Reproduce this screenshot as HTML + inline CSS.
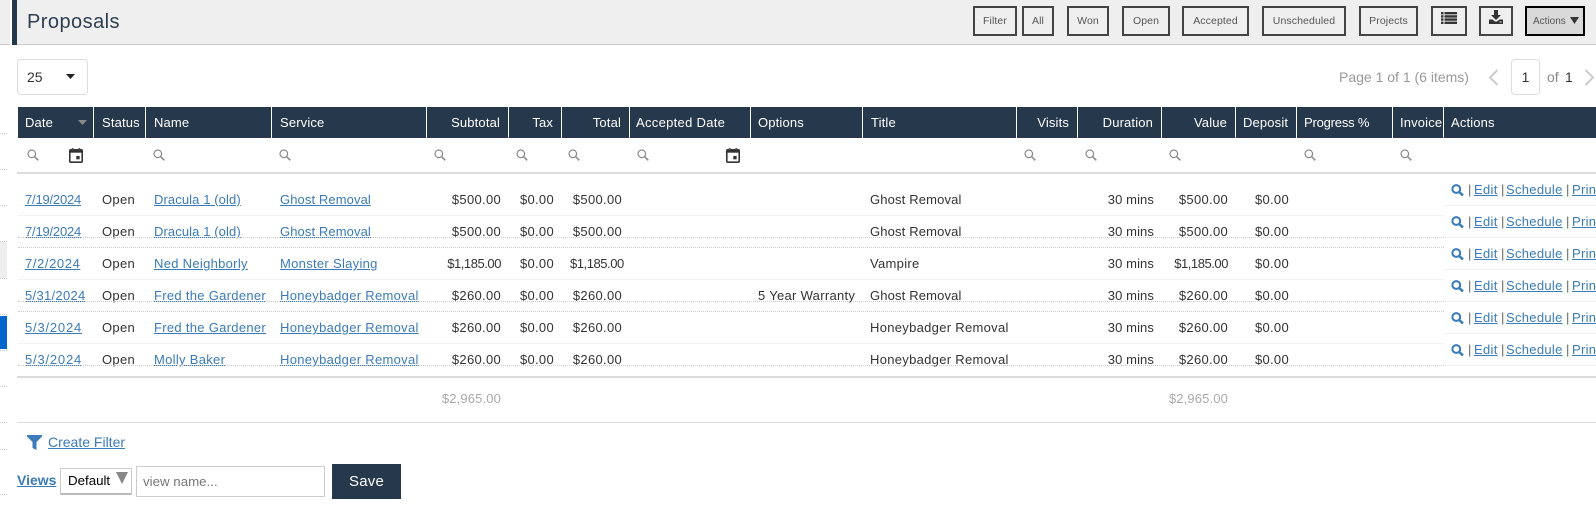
<!DOCTYPE html>
<html>
<head>
<meta charset="utf-8">
<style>
html,body{margin:0;padding:0;background:#fff;}
body{position:relative;width:1596px;height:506px;overflow:hidden;font-family:"Liberation Sans",sans-serif;color:#333;}
.a{position:absolute;}
.btn{position:absolute;top:6px;height:30px;box-sizing:border-box;border:2px solid #444;font-size:10.5px;letter-spacing:.1px;line-height:26px;text-align:center;color:#555;white-space:nowrap;}
table{position:absolute;left:18px;border-collapse:separate;border-spacing:0;table-layout:fixed;width:1578px;font-size:13px;letter-spacing:.3px;}
td,th{padding:0 8px;white-space:nowrap;overflow:hidden;box-sizing:border-box;font-weight:normal;text-align:left;}
th{background:#26384b;color:#fff;height:31px;padding-bottom:1px;border-right:1px solid #fff;letter-spacing:.15px;}
th:first-child,.rows td:first-child{padding-left:7px;}
.r{text-align:right;}
.rows td{height:32px;line-height:32px;padding-top:0;color:#333;}
.rows td.p7{padding-left:7px;}
a{color:#3a7bb8;text-decoration:underline;}
.t{letter-spacing:-.45px;}
.g{letter-spacing:.1px;}
.m{letter-spacing:.15px;}
.solid{position:absolute;left:18px;width:1426px;height:1px;background:#f2f2f2;}
.dot{position:absolute;left:18px;width:1426px;height:0;border-top:1px dotted #ccc;}
.al{position:absolute;left:1444px;width:152px;height:1px;background:#f0f0f0;}
.act{position:absolute;left:1451px;width:145px;height:18px;line-height:18px;font-size:13px;letter-spacing:.3px;color:#666;white-space:nowrap;overflow:hidden;}
.act svg{position:absolute;left:0;top:3px;}
.act span,.act a{position:absolute;top:0;}
.sd{position:absolute;left:0;width:7px;height:0;border-top:1px dotted #ccc;}
.s{position:absolute;top:149px;width:12px;height:12px;}
.cal{position:absolute;top:148px;width:14px;height:15px;}
</style>
</head>
<body>
<svg width="0" height="0" style="position:absolute">
<symbol id="mag" viewBox="0 0 12 12"><circle cx="4.8" cy="4.8" r="3.8" fill="none" stroke="#888" stroke-width="1.2"/><path d="M7.6 7.6L11.3 11.3" stroke="#888" stroke-width="1.5" fill="none"/></symbol>
<symbol id="cal" viewBox="0 0 15 16"><rect x="0" y="1" width="15" height="15" rx="2" fill="#333"/><rect x="3" y="0" width="2" height="2" fill="#555"/><rect x="10" y="0" width="2" height="2" fill="#555"/><rect x="1.7" y="5" width="11.6" height="9.3" fill="#fff"/><rect x="7.8" y="8.5" width="3.6" height="3.6" fill="#333"/></symbol>
<symbol id="bmag" viewBox="0 0 13 12"><circle cx="5.3" cy="5" r="3.9" fill="none" stroke="#3a7bb8" stroke-width="2"/><path d="M8.2 8L12 11.5" stroke="#3a7bb8" stroke-width="2.5" fill="none"/></symbol>
</svg>

<!-- left strip -->
<div class="a" style="left:0;top:0;width:10px;height:44px;background:#efefef;border-bottom:1px solid #ccc"></div>
<div class="sd" style="top:133px"></div>
<div class="sd" style="top:169px"></div>
<div class="sd" style="top:205px"></div>
<div class="a" style="left:0;top:242px;width:7px;height:36px;background:#efefef"></div>
<div class="sd" style="top:241px"></div>
<div class="sd" style="top:278px"></div>
<div class="sd" style="top:314px"></div>
<div class="a" style="left:0;top:316px;width:7px;height:33px;background:#0066cc"></div>
<div class="sd" style="top:350px"></div>
<div class="sd" style="top:386px"></div>
<div class="sd" style="top:422px"></div>
<div class="sd" style="top:449px"></div>
<div class="sd" style="top:494px"></div>

<!-- top band -->
<div class="a" style="left:17px;top:0;width:1579px;height:44px;background:#efefef;border-bottom:1px solid #ccc"></div>
<div class="a" style="left:12px;top:0;width:5px;height:45px;background:#26384b"></div>
<div class="a" style="left:27px;top:8px;font-size:20px;letter-spacing:.45px;line-height:28px;color:#2c3e50">Proposals</div>

<div class="btn" style="left:973px;width:44px">Filter</div>
<div class="btn" style="left:1022px;width:32px">All</div>
<div class="btn" style="left:1067px;width:42px">Won</div>
<div class="btn" style="left:1122px;width:48px">Open</div>
<div class="btn" style="left:1182px;width:67px">Accepted</div>
<div class="btn" style="left:1262px;width:84px">Unscheduled</div>
<div class="btn" style="left:1359px;width:59px">Projects</div>
<div class="btn" style="left:1431px;width:36px"></div>
<svg class="a" style="left:1441px;top:12px" width="16" height="12" viewBox="0 0 16 12"><path d="M0 0h2.5v2.4H0zM3.5 0H16v2.4H3.5zM0 3.2h2.5v2.4H0zM3.5 3.2H16v2.4H3.5zM0 6.4h2.5v2.4H0zM3.5 6.4H16v2.4H3.5zM0 9.6h2.5V12H0zM3.5 9.6H16V12H3.5z" fill="#333"/></svg>
<div class="btn" style="left:1479px;width:34px"></div>
<svg class="a" style="left:1489px;top:10px" width="14" height="14" viewBox="0 0 14 14"><path d="M5 0h4v5h3L7 10 2 5h3z" fill="#333"/><path d="M0 9.5h3.5L6 11.5h2l2.5-2H14V14H0z" fill="#333"/><rect x="10.6" y="11.5" width="2" height="1" fill="#efefef"/></svg>
<div class="btn" style="left:1525px;width:60px;background:#d9d9d9;border-color:#000;text-align:left;padding-left:6px;font-size:10px;letter-spacing:0;line-height:28px">Actions</div>
<svg class="a" style="left:1570px;top:17px" width="9" height="7" viewBox="0 0 9 7"><path d="M0 0h9L4.5 7z" fill="#333"/></svg>

<!-- page size -->
<div class="a" style="left:17px;top:59px;width:71px;height:36px;box-sizing:border-box;border:1px solid #ddd;border-radius:4px;"></div>
<div class="a" style="left:27px;top:69px;font-size:14px;line-height:16px;color:#333">25</div>
<svg class="a" style="left:66px;top:74px" width="9" height="5" viewBox="0 0 9 5"><path d="M0 0h9L4.5 5z" fill="#222"/></svg>

<!-- pagination -->
<div class="a" style="left:1339px;top:69px;font-size:14px;line-height:16px;color:#999;white-space:nowrap">Page 1 of 1 (6 items)</div>
<svg class="a" style="left:1488px;top:69px" width="11" height="17" viewBox="0 0 11 17"><path d="M9.5 1L2 8.5 9.5 16" fill="none" stroke="#ccc" stroke-width="2"/></svg>
<div class="a" style="left:1511px;top:59px;width:29px;height:36px;box-sizing:border-box;border:1px solid #ddd;border-radius:4px;text-align:center;line-height:34px;font-size:14px;color:#333">1</div>
<div class="a" style="left:1547px;top:69px;font-size:14px;line-height:16px;color:#888">of</div>
<div class="a" style="left:1565px;top:69px;font-size:14px;line-height:16px;color:#333">1</div>
<svg class="a" style="left:1584px;top:69px" width="11" height="17" viewBox="0 0 11 17"><path d="M1.5 1L9 8.5 1.5 16" fill="none" stroke="#ccc" stroke-width="2"/></svg>

<!-- header -->
<table style="top:107px">
<colgroup><col style="width:76px"><col style="width:52px"><col style="width:126px"><col style="width:155px"><col style="width:82px"><col style="width:53px"><col style="width:68px"><col style="width:121px"><col style="width:112px"><col style="width:154px"><col style="width:61px"><col style="width:84px"><col style="width:74px"><col style="width:61px"><col style="width:96px"><col style="width:51px"><col></colgroup>
<tr><th>Date</th><th>Status</th><th>Name</th><th>Service</th><th class="r">Subtotal</th><th class="r">Tax</th><th class="r">Total</th><th style="letter-spacing:.3px;padding-left:6px">Accepted Date</th><th style="padding-left:7px">Options</th><th>Title</th><th class="r">Visits</th><th class="r">Duration</th><th class="r">Value</th><th style="padding-left:7px">Deposit</th><th style="letter-spacing:-.2px;padding-left:7px">Progress %</th><th style="padding:0 0 1px 7px">Invoice</th><th style="border-right:0;padding-left:7px">Actions</th></tr>
</table>
<svg class="a" style="left:78px;top:120px" width="9" height="5" viewBox="0 0 9 5"><path d="M0 0h9L4.5 5z" fill="#8a8a8a"/></svg>

<!-- filter icons -->
<svg class="s" style="left:27px"><use href="#mag"/></svg>
<svg class="cal" style="left:69px"><use href="#cal"/></svg>
<svg class="s" style="left:153px"><use href="#mag"/></svg>
<svg class="s" style="left:279px"><use href="#mag"/></svg>
<svg class="s" style="left:434px"><use href="#mag"/></svg>
<svg class="s" style="left:516px"><use href="#mag"/></svg>
<svg class="s" style="left:568px"><use href="#mag"/></svg>
<svg class="s" style="left:637px"><use href="#mag"/></svg>
<svg class="cal" style="left:726px"><use href="#cal"/></svg>
<svg class="s" style="left:1024px"><use href="#mag"/></svg>
<svg class="s" style="left:1085px"><use href="#mag"/></svg>
<svg class="s" style="left:1169px"><use href="#mag"/></svg>
<svg class="s" style="left:1304px"><use href="#mag"/></svg>
<svg class="s" style="left:1400px"><use href="#mag"/></svg>

<div class="a" style="left:17px;top:172px;width:1579px;height:2px;background:#ddd"></div>

<!-- rows -->
<table class="rows" style="top:184px">
<colgroup><col style="width:76px"><col style="width:52px"><col style="width:126px"><col style="width:155px"><col style="width:82px"><col style="width:53px"><col style="width:68px"><col style="width:121px"><col style="width:112px"><col style="width:154px"><col style="width:61px"><col style="width:84px"><col style="width:74px"><col style="width:61px"><col style="width:96px"><col style="width:51px"><col></colgroup>
<tr><td><a style="letter-spacing:-.2px">7/19/2024</a></td><td>Open</td><td><a class="g">Dracula 1 (old)</a></td><td><a class="g">Ghost Removal</a></td><td class="r">$500.00</td><td class="r">$0.00</td><td class="r">$500.00</td><td></td><td></td><td class="m p7">Ghost Removal</td><td></td><td class="r g">30 mins</td><td class="r">$500.00</td><td class="r">$0.00</td><td></td><td></td><td></td></tr>
<tr><td><a style="letter-spacing:-.2px">7/19/2024</a></td><td>Open</td><td><a class="g">Dracula 1 (old)</a></td><td><a class="g">Ghost Removal</a></td><td class="r">$500.00</td><td class="r">$0.00</td><td class="r">$500.00</td><td></td><td></td><td class="m p7">Ghost Removal</td><td></td><td class="r g">30 mins</td><td class="r">$500.00</td><td class="r">$0.00</td><td></td><td></td><td></td></tr>
<tr><td><a style="letter-spacing:.6px">7/2/2024</a></td><td>Open</td><td><a>Ned Neighborly</a></td><td><a>Monster Slaying</a></td><td class="r t">$1,185.00</td><td class="r">$0.00</td><td class="r t">$1,185.00</td><td></td><td></td><td class="p7">Vampire</td><td></td><td class="r g">30 mins</td><td class="r t">$1,185.00</td><td class="r">$0.00</td><td></td><td></td><td></td></tr>
<tr><td><a>5/31/2024</a></td><td>Open</td><td><a>Fred the Gardener</a></td><td><a>Honeybadger Removal</a></td><td class="r">$260.00</td><td class="r">$0.00</td><td class="r">$260.00</td><td></td><td class="p7">5 Year Warranty</td><td class="m p7">Ghost Removal</td><td></td><td class="r g">30 mins</td><td class="r">$260.00</td><td class="r">$0.00</td><td></td><td></td><td></td></tr>
<tr><td><a style="letter-spacing:.8px">5/3/2024</a></td><td>Open</td><td><a>Fred the Gardener</a></td><td><a>Honeybadger Removal</a></td><td class="r">$260.00</td><td class="r">$0.00</td><td class="r">$260.00</td><td></td><td></td><td class="p7">Honeybadger Removal</td><td></td><td class="r g">30 mins</td><td class="r">$260.00</td><td class="r">$0.00</td><td></td><td></td><td></td></tr>
<tr><td><a style="letter-spacing:.8px">5/3/2024</a></td><td>Open</td><td><a>Molly Baker</a></td><td><a>Honeybadger Removal</a></td><td class="r">$260.00</td><td class="r">$0.00</td><td class="r">$260.00</td><td></td><td></td><td class="p7">Honeybadger Removal</td><td></td><td class="r g">30 mins</td><td class="r">$260.00</td><td class="r">$0.00</td><td></td><td></td><td></td></tr>
</table>

<!-- row lines -->
<div class="solid" style="top:215px"></div>
<div class="dot" style="top:237px"></div>
<div class="dot" style="top:247px"></div>
<div class="solid" style="top:279px"></div>
<div class="dot" style="top:301px"></div>
<div class="dot" style="top:311px"></div>
<div class="solid" style="top:343px"></div>
<div class="dot" style="top:365px"></div>
<div class="a" style="left:17px;top:376px;width:1579px;height:2px;background:#ddd"></div>

<!-- actions -->
<div class="al" style="top:205px"></div>
<div class="al" style="top:237px"></div>
<div class="al" style="top:269px"></div>
<div class="al" style="top:301px"></div>
<div class="al" style="top:333px"></div>
<div class="al" style="top:365px"></div>

<div class="act" style="top:181px"><svg width="13" height="12"><use href="#bmag"/></svg><span style="left:17px">|</span><a style="left:23px">Edit</a><span style="left:50px">|</span><a style="left:55px">Schedule</a><span style="left:115px">|</span><a style="left:121px">Print</a></div>
<div class="act" style="top:213px"><svg width="13" height="12"><use href="#bmag"/></svg><span style="left:17px">|</span><a style="left:23px">Edit</a><span style="left:50px">|</span><a style="left:55px">Schedule</a><span style="left:115px">|</span><a style="left:121px">Print</a></div>
<div class="act" style="top:245px"><svg width="13" height="12"><use href="#bmag"/></svg><span style="left:17px">|</span><a style="left:23px">Edit</a><span style="left:50px">|</span><a style="left:55px">Schedule</a><span style="left:115px">|</span><a style="left:121px">Print</a></div>
<div class="act" style="top:277px"><svg width="13" height="12"><use href="#bmag"/></svg><span style="left:17px">|</span><a style="left:23px">Edit</a><span style="left:50px">|</span><a style="left:55px">Schedule</a><span style="left:115px">|</span><a style="left:121px">Print</a></div>
<div class="act" style="top:309px"><svg width="13" height="12"><use href="#bmag"/></svg><span style="left:17px">|</span><a style="left:23px">Edit</a><span style="left:50px">|</span><a style="left:55px">Schedule</a><span style="left:115px">|</span><a style="left:121px">Print</a></div>
<div class="act" style="top:341px"><svg width="13" height="12"><use href="#bmag"/></svg><span style="left:17px">|</span><a style="left:23px">Edit</a><span style="left:50px">|</span><a style="left:55px">Schedule</a><span style="left:115px">|</span><a style="left:121px">Print</a></div>

<!-- totals -->
<div class="a" style="left:401px;width:100px;top:390px;line-height:18px;font-size:13px;letter-spacing:.15px;color:#aaa;text-align:right">$2,965.00</div>
<div class="a" style="left:1128px;width:100px;top:390px;line-height:18px;font-size:13px;letter-spacing:.15px;color:#aaa;text-align:right">$2,965.00</div>
<div class="a" style="left:17px;top:422px;width:1579px;height:1px;background:#ddd"></div>

<!-- bottom -->
<svg class="a" style="left:27px;top:435px" width="15" height="15" viewBox="0 0 15 15"><path d="M0 0h15v1.5L9.5 7v8L5.5 13V7L0 1.5z" fill="#3a7bb8"/></svg>
<a class="a" style="left:48px;top:434px;font-size:14px;line-height:17px;white-space:nowrap">Create Filter</a>
<a class="a" style="left:17px;top:472px;font-size:14px;font-weight:bold;line-height:17px">Views</a>
<div class="a" style="left:60px;top:468px;width:72px;height:27px;box-sizing:border-box;border:1px solid #ccc;border-bottom:2px solid #bbb;font-size:13.3px;line-height:23px;padding-left:7px;color:#000">Default</div>
<svg class="a" style="left:116px;top:472px" width="12" height="12" viewBox="0 0 12 12"><path d="M0 0h12L6 12z" fill="#888"/></svg>
<div class="a" style="left:136px;top:466px;width:189px;height:31px;box-sizing:border-box;border:1px solid #ccc;font-size:13.3px;line-height:29px;padding-left:6px;color:#777">view name...</div>
<div class="a" style="left:332px;top:464px;width:69px;height:35px;background:#26384b;color:#fff;font-size:15px;letter-spacing:.2px;line-height:35px;text-align:center">Save</div>
</body>
</html>
